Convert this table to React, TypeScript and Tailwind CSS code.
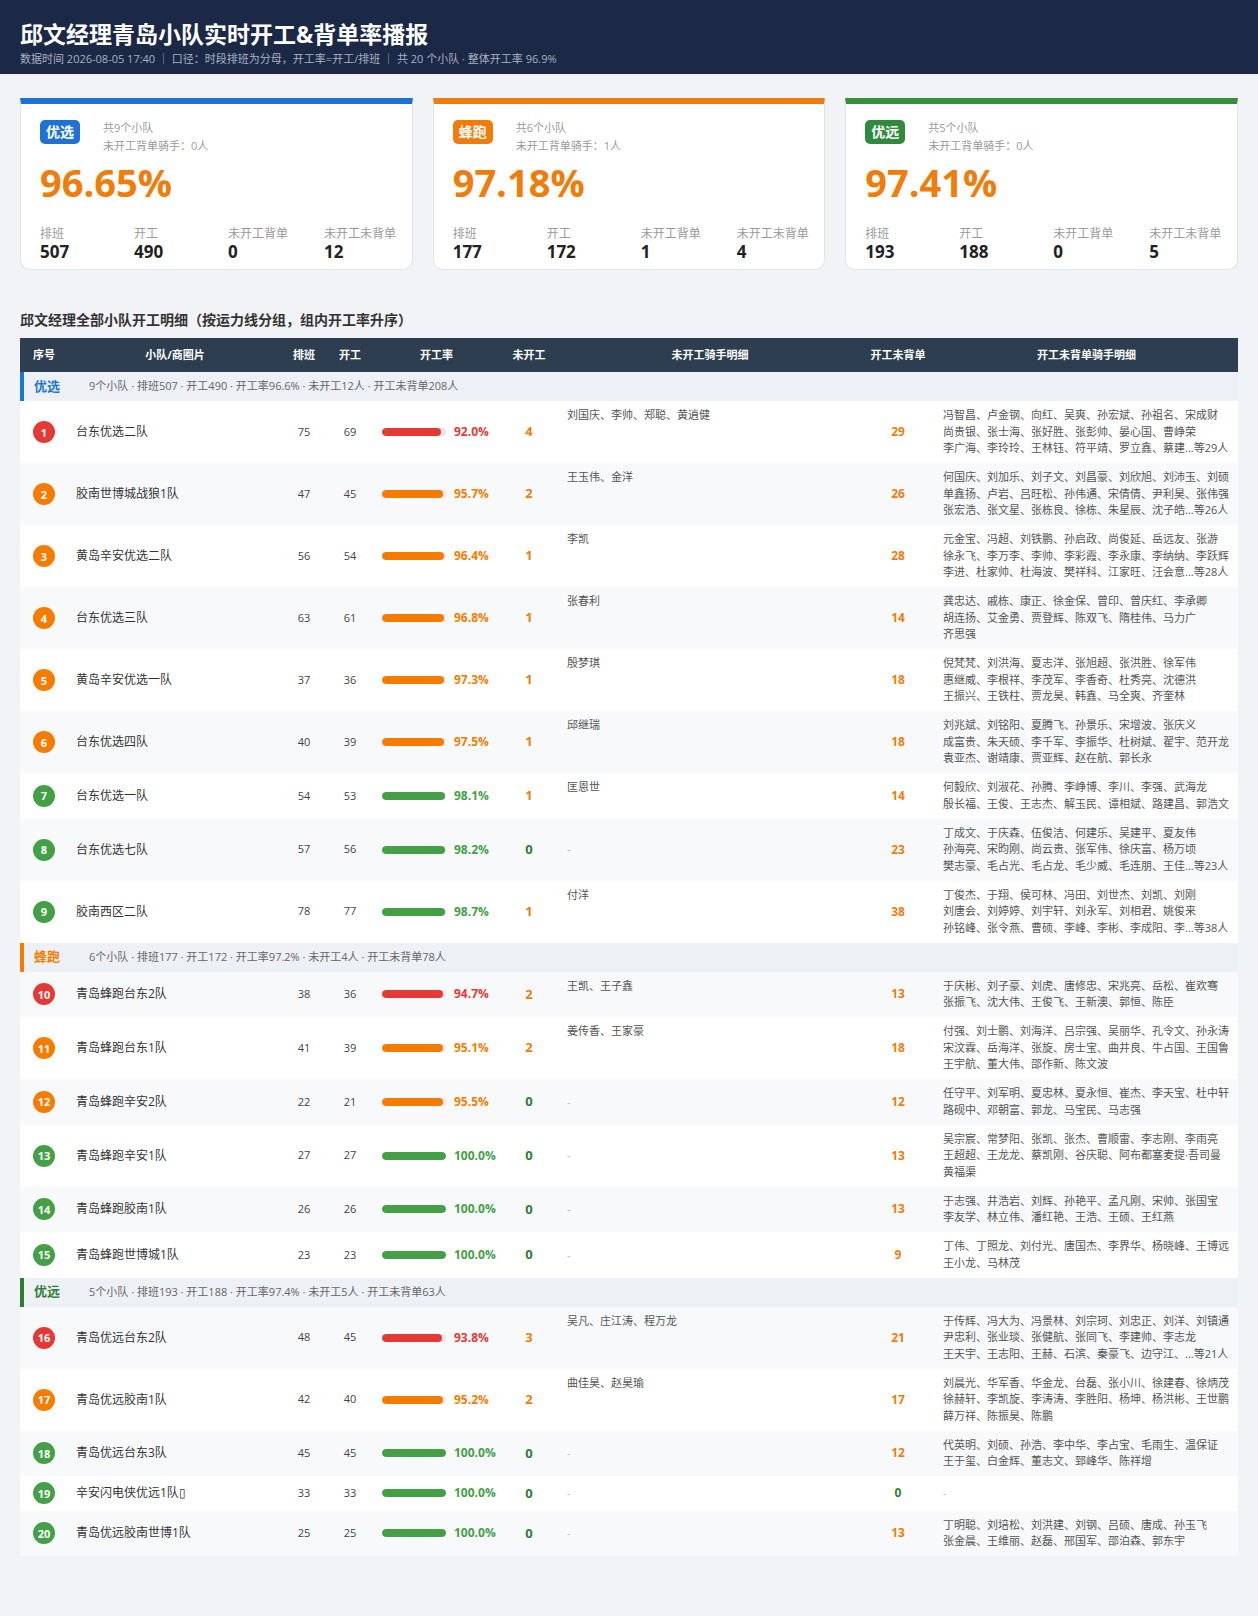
import React from "react";

type Tone = "red" | "orange" | "green";

const toneBg: Record<Tone, string> = {
  red: "bg-[#e53935]",
  orange: "bg-[#f57c00]",
  green: "bg-[#43a047]",
};
const toneText: Record<Tone, string> = {
  red: "text-[#e53935]",
  orange: "text-[#f57c00]",
  green: "text-[#43a047]",
};

function toneOf(rate: number): Tone {
  if (rate < 95) return "red";
  if (rate < 98) return "orange";
  return "green";
}

type Team = {
  n: number;
  name: string;
  pb: number;
  kg: number;
  rate: number;
  wk: number;
  wkNames: string;
  wbd: number;
  detail: string[];
};

type Group = {
  label: string;
  border: string;
  text: string;
  summary: string;
  teams: Team[];
};

const groups: Group[] = [
  {
    label: "优选",
    border: "border-[#1976d2]",
    text: "text-[#1976d2]",
    summary: "9个小队 · 排班507 · 开工490 · 开工率96.6% · 未开工12人 · 开工未背单208人",
    teams: [
      {
        n: 1, name: "台东优选二队", pb: 75, kg: 69, rate: 92.0, wk: 4, wkNames: "刘国庆、李帅、郑聪、黄逍健", wbd: 29,
        detail: [
          "冯智昌、卢金钢、向红、吴爽、孙宏斌、孙祖名、宋成财",
          "尚贵银、张士海、张好胜、张彭帅、晏心国、曹峥荣",
          "李广海、李玲玲、王林钰、符平靖、罗立鑫、蔡建...等29人",
        ],
      },
      {
        n: 2, name: "胶南世博城战狼1队", pb: 47, kg: 45, rate: 95.7, wk: 2, wkNames: "王玉伟、金洋", wbd: 26,
        detail: [
          "何国庆、刘加乐、刘子文、刘昌豪、刘欣旭、刘沛玉、刘硕",
          "单鑫扬、卢岩、吕旺松、孙伟通、宋倩倩、尹利昊、张伟强",
          "张宏浩、张文星、张栋良、徐栋、朱星辰、沈子皓...等26人",
        ],
      },
      {
        n: 3, name: "黄岛辛安优选二队", pb: 56, kg: 54, rate: 96.4, wk: 1, wkNames: "李凯", wbd: 28,
        detail: [
          "元金宝、冯超、刘铁鹏、孙启政、尚俊延、岳远友、张游",
          "徐永飞、李万李、李帅、李彩霞、李永康、李纳纳、李跃辉",
          "李进、杜家帅、杜海波、樊祥科、江家旺、汪会意...等28人",
        ],
      },
      {
        n: 4, name: "台东优选三队", pb: 63, kg: 61, rate: 96.8, wk: 1, wkNames: "张春利", wbd: 14,
        detail: [
          "龚忠达、戚栋、康正、徐金保、曾印、曾庆红、李承卿",
          "胡连扬、艾金勇、贾登辉、陈双飞、隋桂伟、马力广",
          "齐思强",
        ],
      },
      {
        n: 5, name: "黄岛辛安优选一队", pb: 37, kg: 36, rate: 97.3, wk: 1, wkNames: "殷梦琪", wbd: 18,
        detail: [
          "倪梵梵、刘洪海、夏志洋、张旭超、张洪胜、徐军伟",
          "惠继威、李根祥、李茂军、李香奇、杜秀亮、沈德洪",
          "王振兴、王铁柱、贾龙昊、韩鑫、马全爽、齐奎林",
        ],
      },
      {
        n: 6, name: "台东优选四队", pb: 40, kg: 39, rate: 97.5, wk: 1, wkNames: "邱继瑞", wbd: 18,
        detail: [
          "刘兆斌、刘铭阳、夏腾飞、孙景乐、宋增波、张庆义",
          "成富贵、朱天硕、李千军、李振华、杜树斌、翟宇、范开龙",
          "袁亚杰、谢靖康、贾亚辉、赵在航、郭长永",
        ],
      },
      {
        n: 7, name: "台东优选一队", pb: 54, kg: 53, rate: 98.1, wk: 1, wkNames: "匡恩世", wbd: 14,
        detail: [
          "何毅欣、刘淑花、孙腾、李峥博、李川、李强、武海龙",
          "殷长福、王俊、王志杰、解玉民、谭相斌、路建昌、郭浩文",
        ],
      },
      {
        n: 8, name: "台东优选七队", pb: 57, kg: 56, rate: 98.2, wk: 0, wkNames: "", wbd: 23,
        detail: [
          "丁成文、于庆森、伍俊洁、何建乐、吴建平、夏友伟",
          "孙海亮、宋昀刚、尚云贵、张军伟、徐庆富、杨万顷",
          "樊志豪、毛占光、毛占龙、毛少威、毛连朋、王佳...等23人",
        ],
      },
      {
        n: 9, name: "胶南西区二队", pb: 78, kg: 77, rate: 98.7, wk: 1, wkNames: "付洋", wbd: 38,
        detail: [
          "丁俊杰、于翔、侯可林、冯田、刘世杰、刘凯、刘刚",
          "刘唐会、刘婷婷、刘宇轩、刘永军、刘相君、姚俊来",
          "孙铭峰、张令燕、曹硕、李峰、李彬、李成阳、李...等38人",
        ],
      },
    ],
  },
  {
    label: "蜂跑",
    border: "border-[#f57c00]",
    text: "text-[#f57c00]",
    summary: "6个小队 · 排班177 · 开工172 · 开工率97.2% · 未开工4人 · 开工未背单78人",
    teams: [
      {
        n: 10, name: "青岛蜂跑台东2队", pb: 38, kg: 36, rate: 94.7, wk: 2, wkNames: "王凯、王子鑫", wbd: 13,
        detail: [
          "于庆彬、刘子豪、刘虎、唐修忠、宋兆亮、岳松、崔欢骞",
          "张振飞、沈大伟、王俊飞、王新澳、郭恒、陈臣",
        ],
      },
      {
        n: 11, name: "青岛蜂跑台东1队", pb: 41, kg: 39, rate: 95.1, wk: 2, wkNames: "姜传香、王家豪", wbd: 18,
        detail: [
          "付强、刘士鹏、刘海洋、吕宗强、吴丽华、孔令文、孙永涛",
          "宋汶霖、岳海洋、张旋、房士宝、曲井良、牛占国、王国鲁",
          "王宇航、董大伟、邵作新、陈文波",
        ],
      },
      {
        n: 12, name: "青岛蜂跑辛安2队", pb: 22, kg: 21, rate: 95.5, wk: 0, wkNames: "", wbd: 12,
        detail: [
          "任守平、刘军明、夏忠林、夏永恒、崔杰、李天宝、杜中轩",
          "路砚中、邓朝富、郭龙、马宝民、马志强",
        ],
      },
      {
        n: 13, name: "青岛蜂跑辛安1队", pb: 27, kg: 27, rate: 100.0, wk: 0, wkNames: "", wbd: 13,
        detail: [
          "吴宗宸、常梦阳、张凯、张杰、曹顺雷、李志刚、李雨亮",
          "王超超、王龙龙、蔡凯刚、谷庆聪、阿布都塞麦提·吾司曼",
          "黄福渠",
        ],
      },
      {
        n: 14, name: "青岛蜂跑胶南1队", pb: 26, kg: 26, rate: 100.0, wk: 0, wkNames: "", wbd: 13,
        detail: [
          "于志强、井浩岩、刘辉、孙艳平、孟凡刚、宋帅、张国宝",
          "李友学、林立伟、潘红艳、王浩、王硕、王红燕",
        ],
      },
      {
        n: 15, name: "青岛蜂跑世博城1队", pb: 23, kg: 23, rate: 100.0, wk: 0, wkNames: "", wbd: 9,
        detail: [
          "丁伟、丁照龙、刘付光、唐国杰、李界华、杨晓峰、王博远",
          "王小龙、马林茂",
        ],
      },
    ],
  },
  {
    label: "优远",
    border: "border-[#2e7d32]",
    text: "text-[#2e7d32]",
    summary: "5个小队 · 排班193 · 开工188 · 开工率97.4% · 未开工5人 · 开工未背单63人",
    teams: [
      {
        n: 16, name: "青岛优远台东2队", pb: 48, kg: 45, rate: 93.8, wk: 3, wkNames: "吴凡、庄江涛、程万龙", wbd: 21,
        detail: [
          "于传辉、冯大为、冯景林、刘宗珂、刘忠正、刘洋、刘镇通",
          "尹忠利、张业琰、张健航、张同飞、李建帅、李志龙",
          "王天宇、王志阳、王赫、石滨、秦豪飞、边守江、...等21人",
        ],
      },
      {
        n: 17, name: "青岛优远胶南1队", pb: 42, kg: 40, rate: 95.2, wk: 2, wkNames: "曲佳昊、赵昊瑜", wbd: 17,
        detail: [
          "刘晨光、华军香、华金龙、台磊、张小川、徐建春、徐炳茂",
          "徐赫轩、李凯旋、李涛涛、李胜阳、杨坤、杨洪彬、王世鹏",
          "薛万祥、陈振昊、陈鹏",
        ],
      },
      {
        n: 18, name: "青岛优远台东3队", pb: 45, kg: 45, rate: 100.0, wk: 0, wkNames: "", wbd: 12,
        detail: [
          "代英明、刘硕、孙浩、李中华、李占宝、毛雨生、温保证",
          "王于玺、白金辉、董志文、郅峰华、陈祥增",
        ],
      },
      {
        n: 19, name: "辛安闪电侠优远1队▯", pb: 33, kg: 33, rate: 100.0, wk: 0, wkNames: "", wbd: 0,
        detail: [],
      },
      {
        n: 20, name: "青岛优远胶南世博1队", pb: 25, kg: 25, rate: 100.0, wk: 0, wkNames: "", wbd: 13,
        detail: [
          "丁明聪、刘培松、刘洪建、刘钢、吕硕、唐成、孙玉飞",
          "张金晨、王维丽、赵磊、邢国军、邵泊森、郭东宇",
        ],
      },
    ],
  },
];

type CardData = {
  label: string;
  topBorder: string;
  badge: string;
  count: string;
  riders: string;
  rate: string;
  stats: [string, string][];
};

const cards: CardData[] = [
  {
    label: "优选",
    topBorder: "border-t-[#1e73d2]",
    badge: "bg-[#1e73d2]",
    count: "共9个小队",
    riders: "未开工背单骑手：0人",
    rate: "96.65%",
    stats: [["排班", "507"], ["开工", "490"], ["未开工背单", "0"], ["未开工未背单", "12"]],
  },
  {
    label: "蜂跑",
    topBorder: "border-t-[#f27c0a]",
    badge: "bg-[#f27c0a]",
    count: "共6个小队",
    riders: "未开工背单骑手：1人",
    rate: "97.18%",
    stats: [["排班", "177"], ["开工", "172"], ["未开工背单", "1"], ["未开工未背单", "4"]],
  },
  {
    label: "优远",
    topBorder: "border-t-[#388e3c]",
    badge: "bg-[#2f8a3c]",
    count: "共5个小队",
    riders: "未开工背单骑手：0人",
    rate: "97.41%",
    stats: [["排班", "193"], ["开工", "188"], ["未开工背单", "0"], ["未开工未背单", "5"]],
  },
];

function SummaryCard({ card }: { card: CardData }) {
  return (
    <div className={`rounded-b-[10px] border border-[#e1e4e9] border-t-[6px] bg-white pt-4 pr-2 pb-[7px] pl-[19px] ${card.topBorder}`}>
      <div className="flex items-start gap-[23px]">
        <span className={`flex h-[24px] items-center rounded-[5px] px-1.5 text-[14px] font-bold leading-none text-white ${card.badge}`}>
          {card.label}
        </span>
        <div className="-mt-px text-[11px] leading-[18px] text-[#9a9a9a]">
          <div>{card.count}</div>
          <div>{card.riders}</div>
        </div>
      </div>
      <div className="mt-[7px] text-[38px] font-bold leading-[40px] text-[#f07c0a]">{card.rate}</div>
      <div className="mt-[24px] grid grid-cols-[94px_94px_96px_1fr]">
        {card.stats.map(([k, v]) => (
          <div key={k}>
            <div className="whitespace-nowrap text-[12px] leading-[16px] text-[#9a9a9a]">{k}</div>
            <div className="text-[17px] font-bold leading-[20px] text-[#222]">{v}</div>
          </div>
        ))}
      </div>
    </div>
  );
}

function TeamRow({ t }: { t: Team }) {
  const tone = toneOf(t.rate);
  const stripe = t.n % 2 === 0 ? "bg-[#f7f9fb]" : "bg-white";
  return (
    <tr className={stripe}>
      <td className="px-2 py-[6.25px] align-middle">
        <div className={`mx-auto flex h-[22px] w-[22px] items-center justify-center rounded-full text-[11px] font-bold leading-none text-white ${toneBg[tone]}`}>
          {t.n}
        </div>
      </td>
      <td className="px-2 py-[6.25px] align-middle text-[12px] leading-[16px] text-[#333]">{t.name}</td>
      <td className="px-1 py-[6.25px] text-center align-middle text-[11px] text-[#444]">{t.pb}</td>
      <td className="px-1 py-[6.25px] text-center align-middle text-[11px] text-[#444]">{t.kg}</td>
      <td className="py-[6.25px] pr-1 pl-2 align-middle">
        <div className="flex items-center gap-2">
          <div className="h-[8px] w-[64px] shrink-0 overflow-hidden rounded-full bg-[#e4e6ea]">
            <div className={`h-full rounded-full ${toneBg[tone]}`} style={{ width: `${t.rate}%` }} />
          </div>
          <span className={`whitespace-nowrap text-[12px] font-bold ${toneText[tone]}`}>{t.rate.toFixed(1)}%</span>
        </div>
      </td>
      <td className={`px-1 py-[6.25px] text-center align-middle text-[13px] font-bold ${t.wk > 0 ? "text-[#f07c0a]" : "text-[#2e7d32]"}`}>
        {t.wk}
      </td>
      {t.wkNames ? (
        <td className="px-2 py-[6.25px] align-top text-[11px] leading-[16.5px] text-[#555]">{t.wkNames}</td>
      ) : (
        <td className="px-2 py-[6.25px] align-middle text-[11px] leading-[16.5px] text-[#bbb]">-</td>
      )}
      <td className={`px-1 py-[6.25px] text-center align-middle text-[12px] font-bold ${t.wbd > 0 ? "text-[#f07c0a]" : "text-[#2e7d32]"}`}>
        {t.wbd}
      </td>
      {t.detail.length > 0 ? (
        <td className="px-2 py-[6.25px] align-top text-[11px] leading-[16.5px] text-[#555]">
          {t.detail.map((line) => (
            <div key={line} className="whitespace-nowrap">
              {line}
            </div>
          ))}
        </td>
      ) : (
        <td className="px-2 py-[6.25px] align-middle text-[11px] leading-[16.5px] text-[#bbb]">-</td>
      )}
    </tr>
  );
}

export default function App() {
  const heads = ["序号", "小队/商圈片", "排班", "开工", "开工率", "未开工", "未开工骑手明细", "开工未背单", "开工未背单骑手明细"];
  return (
    <div className="min-h-[1616px] bg-[#f1f3f7] font-['Open_Sans','Noto_Sans_CJK_SC',sans-serif]">
      {/* Header */}
      <div className="h-[74px] bg-[#1b2846] px-5 pt-[19px]">
        <h1 className="text-[23px] font-bold leading-[30px] text-white">邱文经理青岛小队实时开工&amp;背单率播报</h1>
        <p className="mt-[2px] text-[11px] leading-[15px] text-[#a9b2c4]">
          数据时间 2026-08-05 17:40 ｜ 口径：时段排班为分母，开工率=开工/排班 ｜ 共 20 个小队 · 整体开工率 96.9%
        </p>
      </div>

      <div className="px-5 pt-6 pb-[60px]">
        {/* Summary cards */}
        <div className="grid grid-cols-3 gap-5">
          {cards.map((c) => (
            <SummaryCard key={c.label} card={c} />
          ))}
        </div>

        {/* Detail table */}
        <h2 className="mt-[40px] mb-[8px] text-[14px] font-bold leading-[20px] text-[#333]">
          邱文经理全部小队开工明细（按运力线分组，组内开工率升序）
        </h2>
        <table className="w-full table-fixed border-collapse">
          <colgroup>
            <col className="w-[48px]" />
            <col className="w-[214px]" />
            <col className="w-[44px]" />
            <col className="w-[48px]" />
            <col className="w-[125px]" />
            <col className="w-[60px]" />
            <col className="w-[302px]" />
            <col className="w-[74px]" />
            <col className="w-[303px]" />
          </colgroup>
          <thead>
            <tr className="h-[34px] bg-[#2c3e50]">
              {heads.map((h) => (
                <th key={h} className="px-1 text-center text-[11px] font-bold text-white">
                  {h}
                </th>
              ))}
            </tr>
          </thead>
          <tbody>
            {groups.map((g) => (
              <React.Fragment key={g.label}>
                <tr>
                  <td colSpan={9} className="p-0">
                    <div className={`flex h-[29px] items-center border-l-4 bg-[#edf0f4] ${g.border}`}>
                      <span className={`w-[65px] pl-[10px] text-[13px] font-bold ${g.text}`}>{g.label}</span>
                      <span className="text-[11px] text-[#666]">{g.summary}</span>
                    </div>
                  </td>
                </tr>
                {g.teams.map((t) => (
                  <TeamRow key={t.n} t={t} />
                ))}
              </React.Fragment>
            ))}
          </tbody>
        </table>
      </div>
    </div>
  );
}
